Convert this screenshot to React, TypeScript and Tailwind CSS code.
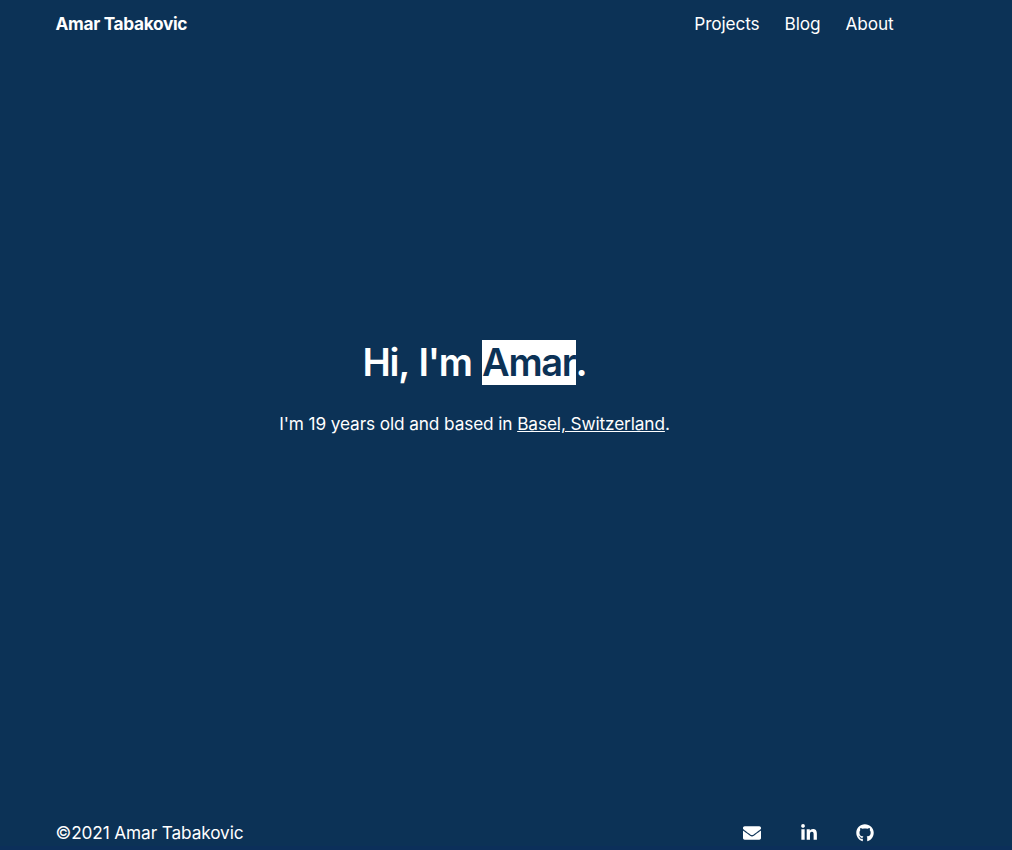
import { FaEnvelope, FaLinkedinIn, FaGithub } from "react-icons/fa";

export default function App() {
  return (
    <div className="flex h-[850px] flex-col border-b-4 border-[#0c2f5a] bg-[#0c3256] pr-[118.5px] pl-[55.5px] font-['Inter',sans-serif] text-[17.25px] leading-6 tracking-[-0.12px] text-white">
      <header className="flex h-12 items-center justify-between">
        <a className="font-bold tracking-[-0.32px]">Amar Tabakovic</a>
        <nav className="flex gap-[25px]">
          <a>Projects</a>
          <a>Blog</a>
          <a>About</a>
        </nav>
      </header>
      <main className="mt-[292px] flex flex-1 flex-col items-center">
        <h1 className="text-[38px] leading-[45px] font-[630] tracking-[-1.3px] [word-spacing:2px]">
          Hi, I'm <span className="inline-block h-[45px] bg-white text-[#0c3256]">Amar</span>.
        </h1>
        <p className="mt-[27px]">
          I'm 19 years old and based in <a className="underline">Basel, Switzerland</a>.
        </p>
      </main>
      <footer className="flex h-[27px] items-center justify-between">
        <span>©2021 Amar Tabakovic</span>
        <div className="flex gap-[38.5px] pr-[19.5px]">
          <FaEnvelope size={18} />
          <FaLinkedinIn size={18} />
          <FaGithub size={18} />
        </div>
      </footer>
    </div>
  );
}
